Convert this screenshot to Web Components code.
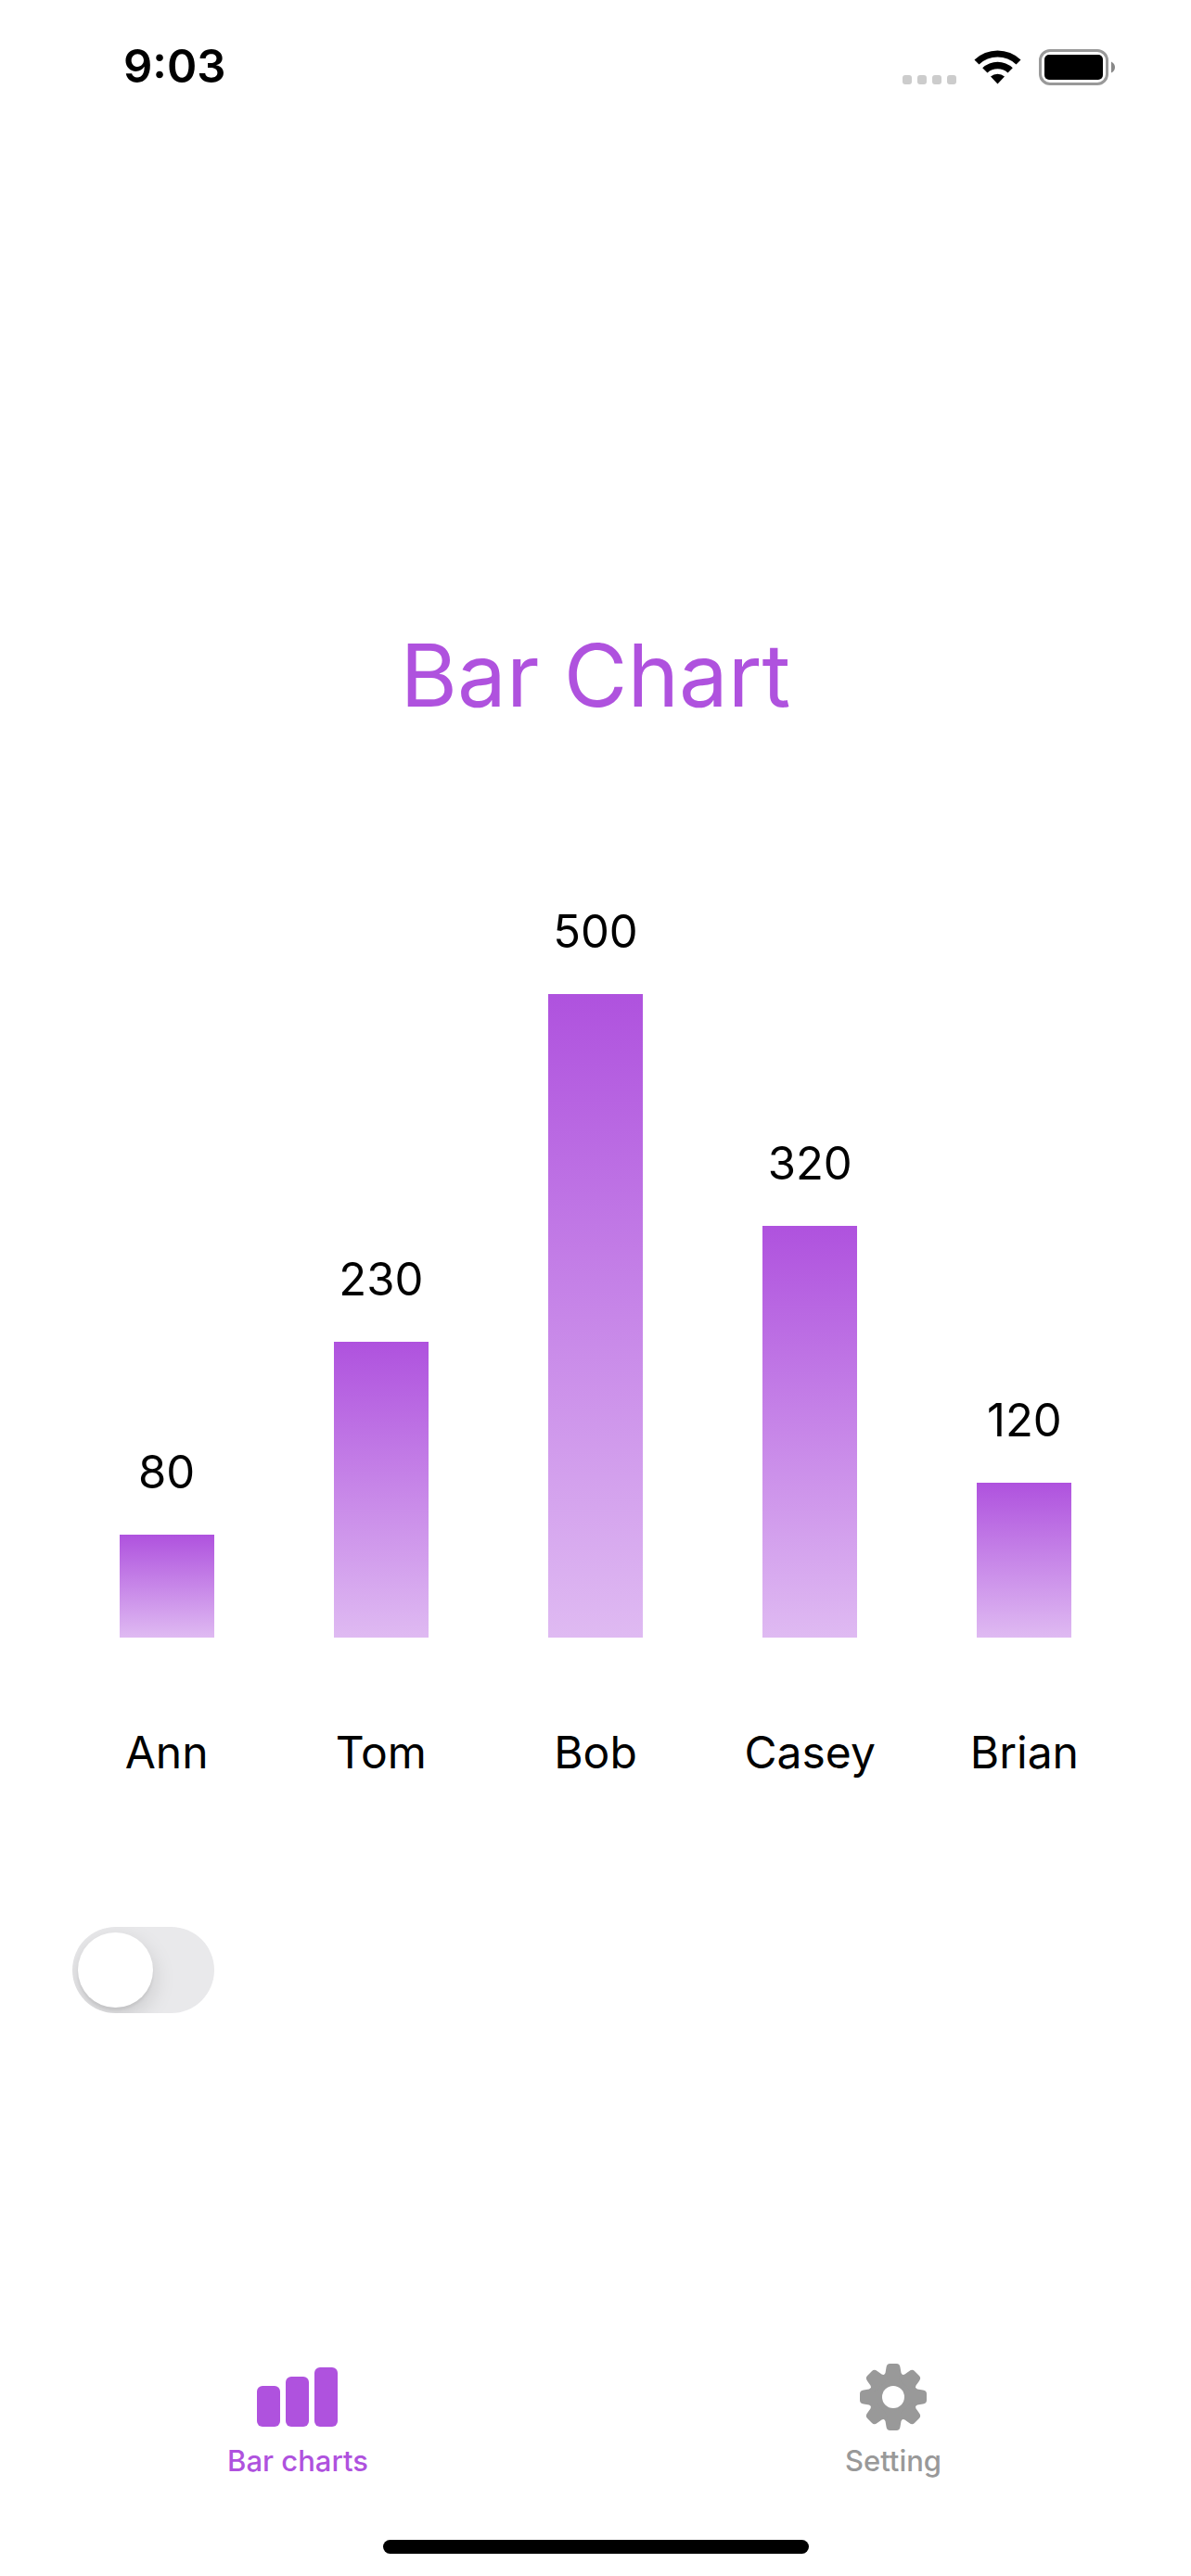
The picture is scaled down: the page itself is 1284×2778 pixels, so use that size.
<!DOCTYPE html>
<html lang="en">
<head>
<meta charset="utf-8">
<meta name="viewport" content="width=device-width, initial-scale=1">
<title>Bar Chart</title>
<style>
  :root { --accent: #af52de; --muted: #999999; }
  body { margin: 0; background: #fff; color: #000; font-family: Inter, "Liberation Sans", sans-serif; }
</style>
</head>
<body>
<app-screen>
  <status-bar slot="status" time="9:03"></status-bar>
  <h1 slot="title">Bar Chart</h1>
  <bar-chart>
    <chart-bar value="80">Ann</chart-bar>
    <chart-bar value="230">Tom</chart-bar>
    <chart-bar value="500">Bob</chart-bar>
    <chart-bar value="320">Casey</chart-bar>
    <chart-bar value="120">Brian</chart-bar>
  </bar-chart>
  <toggle-switch label="Switch chart data"></toggle-switch>
  <tab-bar slot="tabs">
    <tab-item selected>
      <svg slot="icon" width="88" height="64" viewBox="0 0 88 64" fill="currentColor" aria-hidden="true">
        <rect x="0" y="20" width="25" height="44" rx="6"/>
        <rect x="31" y="10" width="25" height="54" rx="6"/>
        <rect x="62" y="0" width="25" height="64" rx="6"/>
      </svg>
      Bar charts
    </tab-item>
    <tab-item>
      <svg slot="icon" width="72" height="72" viewBox="-36 -36 72 72" fill="currentColor" aria-hidden="true">
        <defs>
          <mask id="hub" maskUnits="userSpaceOnUse" x="-36" y="-36" width="72" height="72">
            <rect x="-36" y="-36" width="72" height="72" fill="#fff"/>
            <circle r="12" fill="#000"/>
          </mask>
          <path id="tooth" d="M-12-23Q-9-24-8.500-26L-7.500-32Q-7-36-3.500-36H3.500Q7-36 7.500-32L8.500-26Q9-24 12-23L10-18H-10Z"/>
        </defs>
        <g mask="url(#hub)">
          <circle r="25.500"/>
          <use href="#tooth"/>
          <use href="#tooth" transform="rotate(45)"/>
          <use href="#tooth" transform="rotate(90)"/>
          <use href="#tooth" transform="rotate(135)"/>
          <use href="#tooth" transform="rotate(180)"/>
          <use href="#tooth" transform="rotate(225)"/>
          <use href="#tooth" transform="rotate(270)"/>
          <use href="#tooth" transform="rotate(315)"/>
        </g>
      </svg>
      Setting
    </tab-item>
  </tab-bar>
</app-screen>

<script>
class BaseElement extends HTMLElement {
  render(html) {
    if (!this.shadowRoot) this.attachShadow({ mode: "open" });
    this.shadowRoot.innerHTML = html;
  }
}

customElements.define("app-screen", class extends BaseElement {
  connectedCallback() {
    this.render(`
      <style>
        :host { display: flex; flex-direction: column; min-height: 100vh; }
        main { flex: 1; display: flex; flex-direction: column; padding-top: 524px; }
        ::slotted(h1) { margin: 0 0 187px; color: var(--accent); text-align: center;
          font-size: 94px; line-height: 120px; font-weight: 400; }
      </style>
      <slot name="status"></slot>
      <main><slot name="title"></slot><slot></slot></main>
      <slot name="tabs"></slot>`);
  }
});

customElements.define("status-bar", class extends BaseElement {
  connectedCallback() {
    this.render(`
      <style>
        :host { display: flex; justify-content: space-between; align-items: center;
          height: 144px; box-sizing: border-box; padding: 0 82px 0 133px; }
        time { font-size: 49px; line-height: 60px; font-weight: 600; }
        svg { display: block; }
      </style>
      <time>${this.getAttribute("time")}</time>
      <svg width="229" height="40" viewBox="0 0 229 40" role="img" aria-label="No signal, Wi-Fi on, battery full">
        <g fill="#ccc">
          <rect x="0" y="29" width="10" height="10" rx="3"/>
          <rect x="16" y="29" width="10" height="10" rx="3"/>
          <rect x="32" y="29" width="10" height="10" rx="3"/>
          <rect x="48" y="29" width="10" height="10" rx="3"/>
        </g>
        <path d="M77.500 12.500A36 36 0 0 1 127.500 12.500L122.500 17.500A29 29 0 0 0 82.500 17.500ZM86.200 21.200A24 24 0 0 1 118.800 21.200L113.500 26.500A16.500 16.500 0 0 0 91.500 26.500ZM95 30.500A11.500 11.500 0 0 1 110 30.500L102.500 38.500Z"/>
        <rect x="148.500" y="2.500" width="72" height="36" rx="10.500" fill="none" stroke="#999" stroke-width="3"/>
        <rect x="153" y="7" width="63" height="27" rx="5"/>
        <path d="M225 14.500Q229 16.500 229 20.500T225 26.500Z" fill="#888"/>
      </svg>`);
  }
});

customElements.define("bar-chart", class extends BaseElement {
  connectedCallback() {
    this.render(`
      <style>
        :host { display: grid; grid-template-columns: repeat(5, 1fr); align-items: end; padding: 0 64px; }
      </style>
      <slot></slot>`);
  }
});

customElements.define("chart-bar", class extends BaseElement {
  connectedCallback() {
    const value = Number(this.getAttribute("value"));
    this.render(`
      <style>
        :host { display: flex; flex-direction: column; align-items: center; min-width: 0;
          font-size: 48px; line-height: 60px; --full: 694px; }
        .value { font-size: 49px; }
        .bar { width: 102px; height: calc(var(--full) * ${value} / 500); margin: 37px 0 94px;
          background: linear-gradient(#af52de, #dfbaf2); }
      </style>
      <span class="value">${value}</span>
      <div class="bar"></div>
      <span><slot></slot></span>`);
  }
});

customElements.define("toggle-switch", class extends BaseElement {
  connectedCallback() {
    this.render(`
      <style>
        :host { display: flex; padding: 158px 78px 0; }
        input { appearance: none; margin: 0; box-sizing: border-box; width: 153px; height: 93px; padding: 6px;
          display: flex; border-radius: 47px; background: #e9e9eb; overflow: hidden; cursor: pointer; }
        input::before { content: ""; width: 81px; height: 81px; border-radius: 50%; background: #fff;
          box-shadow: 0 9px 24px rgba(0,0,0,.15), 0 3px 3px rgba(0,0,0,.06); }
        input:checked { background: var(--accent); justify-content: flex-end; }
      </style>
      <input type="checkbox" role="switch" aria-label="${this.getAttribute("label")}">`);
  }
});

customElements.define("tab-bar", class extends BaseElement {
  connectedCallback() {
    this.render(`
      <style>
        :host { display: flex; flex-direction: column; align-items: center; padding-bottom: 24px; }
        nav { display: flex; align-self: stretch; margin-bottom: 67px; }
        .home { width: 459px; height: 15px; border-radius: 8px; background: #000; }
      </style>
      <nav><slot></slot></nav>
      <div class="home"></div>`);
  }
});

customElements.define("tab-item", class extends BaseElement {
  connectedCallback() {
    this.render(`
      <style>
        :host { display: flex; flex: 1; color: var(--muted); }
        :host([selected]) { color: var(--accent); }
        button { flex: 1; display: flex; flex-direction: column; align-items: center; gap: 15px; padding: 0;
          border: 0; background: none; color: inherit; font: 500 31px/36px Inter, "Liberation Sans", sans-serif; cursor: pointer; }
        .icon { display: flex; align-items: center; height: 72px; }
      </style>
      <button type="button">
        <span class="icon"><slot name="icon"></slot></span>
        <span><slot></slot></span>
      </button>`);
  }
});
</script>
</body>
</html>
